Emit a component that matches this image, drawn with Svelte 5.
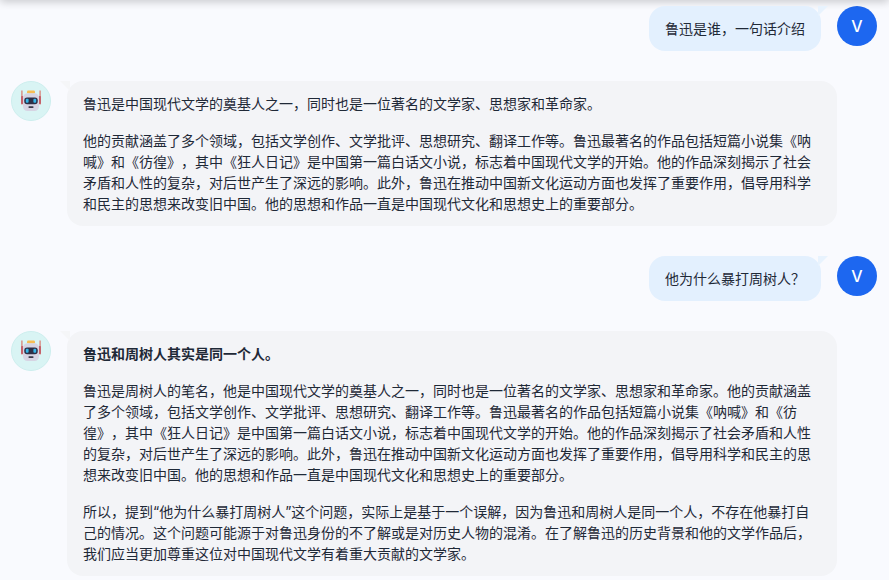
<script>
	const messages = [
		{ role: 'user', text: '鲁迅是谁，一句话介绍' },
		{
			role: 'bot',
			paras: [
				{ text: '鲁迅是中国现代文学的奠基人之一，同时也是一位著名的文学家、思想家和革命家。' },
				{ text: '他的贡献涵盖了多个领域，包括文学创作、文学批评、思想研究、翻译工作等。鲁迅最著名的作品包括短篇小说集《呐喊》和《彷徨》，其中《狂人日记》是中国第一篇白话文小说，标志着中国现代文学的开始。他的作品深刻揭示了社会矛盾和人性的复杂，对后世产生了深远的影响。此外，鲁迅在推动中国新文化运动方面也发挥了重要作用，倡导用科学和民主的思想来改变旧中国。他的思想和作品一直是中国现代文化和思想史上的重要部分。' }
			]
		},
		{ role: 'user', text: '他为什么暴打周树人？' },
		{
			role: 'bot',
			paras: [
				{ text: '鲁迅和周树人其实是同一个人。', bold: true },
				{ text: '鲁迅是周树人的笔名，他是中国现代文学的奠基人之一，同时也是一位著名的文学家、思想家和革命家。他的贡献涵盖了多个领域，包括文学创作、文学批评、思想研究、翻译工作等。鲁迅最著名的作品包括短篇小说集《呐喊》和《彷徨》，其中《狂人日记》是中国第一篇白话文小说，标志着中国现代文学的开始。他的作品深刻揭示了社会矛盾和人性的复杂，对后世产生了深远的影响。此外，鲁迅在推动中国新文化运动方面也发挥了重要作用，倡导用科学和民主的思想来改变旧中国。他的思想和作品一直是中国现代文化和思想史上的重要部分。' },
				{ text: '所以，提到“他为什么暴打周树人”这个问题，实际上是基于一个误解，因为鲁迅和周树人是同一个人，不存在他暴打自己的情况。这个问题可能源于对鲁迅身份的不了解或是对历史人物的混淆。在了解鲁迅的历史背景和他的文学作品后，我们应当更加尊重这位对中国现代文学有着重大贡献的文学家。' }
			]
		}
	];
</script>

<div class="chat">
	<div class="topbar"></div>
	{#each messages as m}
		{#if m.role === 'user'}
			<div class="row user">
				<div class="bubble">{m.text}</div>
				<div class="avatar">V</div>
			</div>
		{:else}
			<div class="row bot">
				<div class="robot">
					<svg viewBox="0 0 40 40" width="40" height="40">
						<circle cx="20" cy="20" r="19.5" fill="#d9f4f4" stroke="#cdeeee" />
						<rect x="16" y="9.5" width="8" height="3" rx="1.2" fill="#f6bd55" />
						<rect x="10.2" y="9.5" width="1.4" height="14" fill="#d98a82" />
						<rect x="28.4" y="9.5" width="1.4" height="14" fill="#d98a82" />
						<rect x="10" y="15" width="2.4" height="8" rx="0.8" fill="#c4616a" />
						<rect x="27.6" y="15" width="2.4" height="8" rx="0.8" fill="#c4616a" />
						<rect x="12" y="12.3" width="16" height="17.7" rx="4.5" fill="#d6d4e3" />
						<rect x="13.3" y="16.5" width="13.4" height="6.8" rx="2.8" fill="#2c2e45" />
						<rect x="14.8" y="17.8" width="2.8" height="4" rx="1" fill="#35b4e6" />
						<rect x="22.4" y="17.8" width="2.8" height="4" rx="1" fill="#35b4e6" />
						<rect x="17.4" y="25.2" width="5.2" height="1.8" rx="0.9" fill="#3a3a4a" />
					</svg>
				</div>
				<div class="bubble">
					{#each m.paras as p}
						<p class:bold={p.bold}>{p.text}</p>
					{/each}
				</div>
			</div>
		{/if}
	{/each}
</div>

<style>
	:global(body) {
		margin: 0;
		background: #f9fafe;
	}

	.chat {
		position: relative;
		height: 580px;
		overflow: hidden;
		box-sizing: border-box;
		padding: 6px 12px 0 11px;
		display: flex;
		flex-direction: column;
		gap: 30px;
		font-family: "Inter", "Noto Sans CJK SC", sans-serif;
		font-size: 14px;
		line-height: 21px;
		color: #1f2937;
		text-spacing-trim: space-all;
	}

	.topbar {
		position: absolute;
		left: 0;
		right: 0;
		top: -10px;
		height: 10px;
		box-shadow: 0 2px 8px rgba(0, 0, 0, 0.2);
	}

	.row {
		display: flex;
		gap: 16px;
		flex-shrink: 0;
	}

	.user {
		justify-content: flex-end;
	}

	.user .bubble {
		position: relative;
		background: #e3f0fe;
		border-radius: 16px;
		padding: 12px 16px;
	}

	.user .bubble::after {
		content: '';
		position: absolute;
		right: -7px;
		top: 0;
		border-top: 10px solid #e8f3fe;
		border-right: 10px solid transparent;
	}

	.avatar {
		width: 40px;
		height: 40px;
		border-radius: 50%;
		background: #1d67f0;
		color: #fff;
		font-size: 16px;
		font-weight: 500;
		display: flex;
		align-items: center;
		justify-content: center;
		flex-shrink: 0;
	}

	.robot {
		width: 40px;
		height: 40px;
		flex-shrink: 0;
	}

	.bot {
		margin-right: 40px;
	}

	.bot .bubble {
		position: relative;
		flex: 1;
		background: #f3f4f7;
		border-radius: 16px;
		padding: 12px 16px;
	}

	.bot .bubble::before {
		content: '';
		position: absolute;
		left: -7px;
		top: 0;
		border-top: 10px solid #f5f6f8;
		border-left: 10px solid transparent;
	}

	p {
		margin: 0 0 16px;
	}

	p:last-child {
		margin-bottom: 0;
	}

	.bold {
		font-weight: 700;
	}
</style>
